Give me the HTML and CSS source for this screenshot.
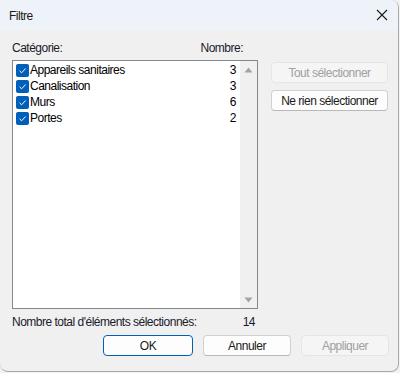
FILE: index.html
```html
<!DOCTYPE html>
<html lang="fr">
<head>
<meta charset="utf-8">
<link rel="stylesheet" href="styles.css">
</head>
<body>
<div class="window">
  <div class="titlebar">
    <span class="title">Filtre</span>
    <svg class="close" width="12" height="12" viewBox="0 0 12 12"><path d="M1 1L11 11M11 1L1 11" stroke="#1a1a1a" stroke-width="1.1" fill="none"/></svg>
  </div>
  <div class="content">
    <div class="main">
      <div class="left">
        <div class="headers"><span>Catégorie:</span><span class="hnum">Nombre:</span></div>
        <div class="listbox">
          <div class="rows">
            <div class="row"><span class="cb"><svg width="13" height="13" viewBox="0 0 13 13"><path d="M3.5 6.8L5.6 8.8L9.6 4.5" stroke="#fff" stroke-width="1" fill="none"/></svg></span><span class="name">Appareils sanitaires</span><span class="num">3</span></div>
            <div class="row"><span class="cb"><svg width="13" height="13" viewBox="0 0 13 13"><path d="M3.5 6.8L5.6 8.8L9.6 4.5" stroke="#fff" stroke-width="1" fill="none"/></svg></span><span class="name">Canalisation</span><span class="num">3</span></div>
            <div class="row"><span class="cb"><svg width="13" height="13" viewBox="0 0 13 13"><path d="M3.5 6.8L5.6 8.8L9.6 4.5" stroke="#fff" stroke-width="1" fill="none"/></svg></span><span class="name">Murs</span><span class="num">6</span></div>
            <div class="row"><span class="cb"><svg width="13" height="13" viewBox="0 0 13 13"><path d="M3.5 6.8L5.6 8.8L9.6 4.5" stroke="#fff" stroke-width="1" fill="none"/></svg></span><span class="name">Portes</span><span class="num">2</span></div>
          </div>
          <div class="scrollbar">
            <svg width="9" height="6" viewBox="0 0 9 6"><path d="M4.5 0.5L8.5 5.5H0.5Z" fill="#a3a3a3"/></svg>
            <svg width="9" height="6" viewBox="0 0 9 6"><path d="M0.5 0.5H8.5L4.5 5.5Z" fill="#a3a3a3"/></svg>
          </div>
        </div>
        <div class="total"><span>Nombre total d'éléments sélectionnés:</span><span class="tnum">14</span></div>
      </div>
      <div class="side">
        <button class="btn disabled">Tout sélectionner</button>
        <button class="btn">Ne rien sélectionner</button>
      </div>
    </div>
    <div class="footer">
      <button class="btn fbtn default">OK</button>
      <button class="btn fbtn">Annuler</button>
      <button class="btn fbtn disabled">Appliquer</button>
    </div>
  </div>
</div>
</body>
</html>
```

FILE: styles.css
```css
html, body {
  margin: 0;
  padding: 0;
}
body {
  width: 400px;
  height: 373px;
  background: #f2f2f2;
  font-family: "Liberation Sans", Arial, sans-serif;
  font-size: 12px;
  letter-spacing: -0.5px;
  color: #000;
  overflow: hidden;
}
.window {
  box-sizing: border-box;
  width: 399px;
  height: 372px;
  border: 1px solid #a9a9a9;
  border-top: none;
  border-left: none;
  border-radius: 0 8px 8px 8px;
  background: #f0f0f0;
  overflow: hidden;
  display: flex;
  flex-direction: column;
}
.titlebar {
  height: 30px;
  flex: none;
  background: #eef3f9;
  display: flex;
  align-items: center;
  justify-content: space-between;
  padding: 0 8px 0 9px;
}
.title {
  color: #1a1a1a;
  margin-top: 1px;
}
.close {
  margin-right: 2px;
}
.content {
  flex: 1;
  padding: 11px 9px 0 12px;
  display: flex;
  flex-direction: column;
}
.main {
  display: flex;
  gap: 13px;
}
.left {
  width: 246px;
  display: flex;
  flex-direction: column;
}
.headers {
  height: 15px;
  display: flex;
  justify-content: space-between;
  padding-right: 15px;
  color: #1a1a2a;
}
.listbox {
  margin-top: 4px;
  height: 249px;
  box-sizing: border-box;
  border: 1px solid #828790;
  background: #fff;
  display: flex;
}
.rows {
  flex: 1;
  padding: 1px 3px 0 3px;
}
.row {
  height: 16px;
  display: flex;
  align-items: center;
}
.cb {
  width: 13px;
  height: 13px;
  border-radius: 2px;
  background: #005fb8;
  display: flex;
  margin-right: 1px;
}
.name { flex: 1; }
.num { margin-right: 1px; }
.scrollbar {
  width: 17px;
  background: #f0f0f0;
  display: flex;
  flex-direction: column;
  align-items: center;
  justify-content: space-between;
  padding: 6px 0 5px;
}
.total {
  margin-top: 6px;
  height: 15px;
  display: flex;
  justify-content: space-between;
  padding-right: 3px;
  color: #1a1a2a;
}
.side {
  display: flex;
  flex-direction: column;
  gap: 7px;
  padding-top: 21px;
}
.btn {
  font-family: "Liberation Sans", Arial, sans-serif;
  font-size: 12px;
  letter-spacing: -0.5px;
  box-sizing: border-box;
  width: 117px;
  height: 21px;
  border: 1px solid #d0d0d0;
  border-bottom-color: #b8b8b8;
  border-radius: 4px;
  background: #fdfdfd;
  color: #1a1a1a;
  padding: 0;
  margin: 0;
}
.btn.disabled {
  background: #f5f5f5;
  border-color: #e5e5e5;
  color: #a0a0a0;
}
.btn.default {
  border: 1px solid #005fb8;
}
.footer {
  margin-top: 5px;
  display: flex;
  justify-content: flex-end;
  gap: 10px;
}
.fbtn {
  width: 88px;
}
.fbtn.default {
  width: 90px;
}
```
